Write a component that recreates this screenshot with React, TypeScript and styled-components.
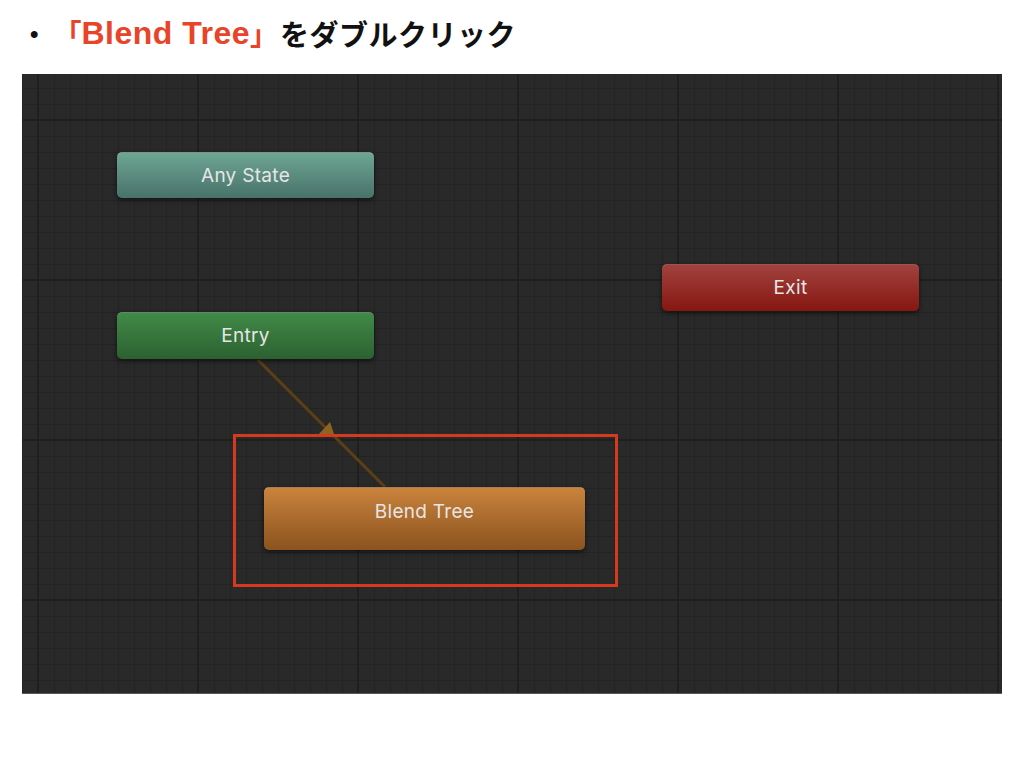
import React from 'react';
import styled, { createGlobalStyle } from 'styled-components';

const GlobalStyle = createGlobalStyle`
  html, body {
    margin: 0;
    padding: 0;
    background: #ffffff;
  }
`;

type NodeKind = 'any' | 'entry' | 'exit' | 'blend';

const nodeColors: Record<NodeKind, [string, string]> = {
  any: ['#6ea593', '#48726a'],
  entry: ['#418a48', '#2c6131'],
  exit: ['#a1423e', '#861610'],
  blend: ['#c9833c', '#8b531f'],
};

type StateNodeData = {
  label: string;
  kind: NodeKind;
  left: number;
  top: number;
  width: number;
  height: number;
};

const nodes: StateNodeData[] = [
  { label: 'Any State', kind: 'any', left: 95, top: 78, width: 257, height: 46 },
  { label: 'Entry', kind: 'entry', left: 95, top: 238, width: 257, height: 47 },
  { label: 'Exit', kind: 'exit', left: 640, top: 190, width: 257, height: 47 },
  { label: 'Blend Tree', kind: 'blend', left: 242, top: 413, width: 321, height: 63 },
];

const App: React.FC = () => {
  return (
    <>
      <GlobalStyle />
      <Page>
        <Header>
          <Bullet>•</Bullet>
          <Highlight>
            <Bracket>「</Bracket>
            <Latin>Blend Tree</Latin>
            <Bracket>」</Bracket>
          </Highlight>
          <Plain>をダブルクリック</Plain>
        </Header>
        <Canvas>
          <Wires width={980} height={620}>
            <line x1={236} y1={286} x2={363} y2={413} stroke="#5b3f16" strokeWidth={3} />
            <polygon points="308,348 296,361 313,363" fill="#8d6421" />
          </Wires>
          {nodes.map((n) => (
            <StateNode
              key={n.label}
              $kind={n.kind}
              style={{ left: n.left, top: n.top, width: n.width, height: n.height }}
            >
              {n.label}
            </StateNode>
          ))}
          <SelectBox />
        </Canvas>
      </Page>
    </>
  );
};

export default App;

const Page = styled.div`
  width: 1024px;
  height: 768px;
  display: flex;
  flex-direction: column;
`;

const Header = styled.div`
  height: 66px;
  margin-bottom: 8px;
  padding-left: 30px;
  display: flex;
  align-items: center;
  font-weight: bold;
  font-family: "Noto Sans CJK JP", sans-serif;
`;

const Bullet = styled.span`
  font-family: "Liberation Sans", sans-serif;
  font-size: 24px;
  color: #111;
  margin-right: 15px;
  margin-top: 2px;
`;

const Highlight = styled.span`
  display: flex;
  align-items: center;
  color: #e8442a;
`;

const Bracket = styled.span`
  font-size: 28px;
  font-family: "Noto Sans CJK JP", sans-serif;
`;

const Latin = styled.span`
  font-family: "Liberation Sans", Arial, sans-serif;
  font-size: 32px;
  letter-spacing: 0.5px;
  margin-top: 1px;
`;

const Plain = styled.span`
  font-size: 29px;
  color: #111;
  letter-spacing: 0.5px;
  margin-left: 2px;
`;

const Canvas = styled.div`
  position: relative;
  margin-left: 22px;
  width: 980px;
  height: 620px;
  overflow: hidden;
  background-color: #292929;
  background-image:
    linear-gradient(to right, #1f1f1f 2px, transparent 2px),
    linear-gradient(to bottom, #1f1f1f 2px, transparent 2px),
    linear-gradient(to right, #232323 1px, transparent 1px),
    linear-gradient(to bottom, #232323 1px, transparent 1px);
  background-size: 160px 160px, 160px 160px, 16px 16px, 16px 16px;
  background-position: 15px 0, 0 45px, 16px 0, 0 14px;
  border-bottom: 1px solid #5a5a5a;
  box-sizing: border-box;
`;

const Wires = styled.svg`
  position: absolute;
  left: 0;
  top: 0;
`;

const StateNode = styled.div<{ $kind: NodeKind }>`
  position: absolute;
  box-sizing: border-box;
  display: flex;
  justify-content: center;
  align-items: ${(p) => (p.$kind === 'blend' ? 'flex-start' : 'center')};
  padding-top: ${(p) => (p.$kind === 'blend' ? '12px' : '0')};
  border-radius: 5px;
  background: linear-gradient(
    to bottom,
    ${(p) => nodeColors[p.$kind][0]},
    ${(p) => nodeColors[p.$kind][1]}
  );
  border-top: 1px solid rgba(255, 255, 255, 0.25);
  box-shadow: 0 2px 5px rgba(0, 0, 0, 0.55);
  color: #e6e6e6;
  font-family: Inter, "Noto Sans", sans-serif;
  font-size: 19px;
  letter-spacing: 0.3px;
  line-height: 24px;
`;

const SelectBox = styled.div`
  position: absolute;
  left: 211px;
  top: 360px;
  width: 385px;
  height: 153px;
  box-sizing: border-box;
  border: 3px solid #d53a1e;
`;
